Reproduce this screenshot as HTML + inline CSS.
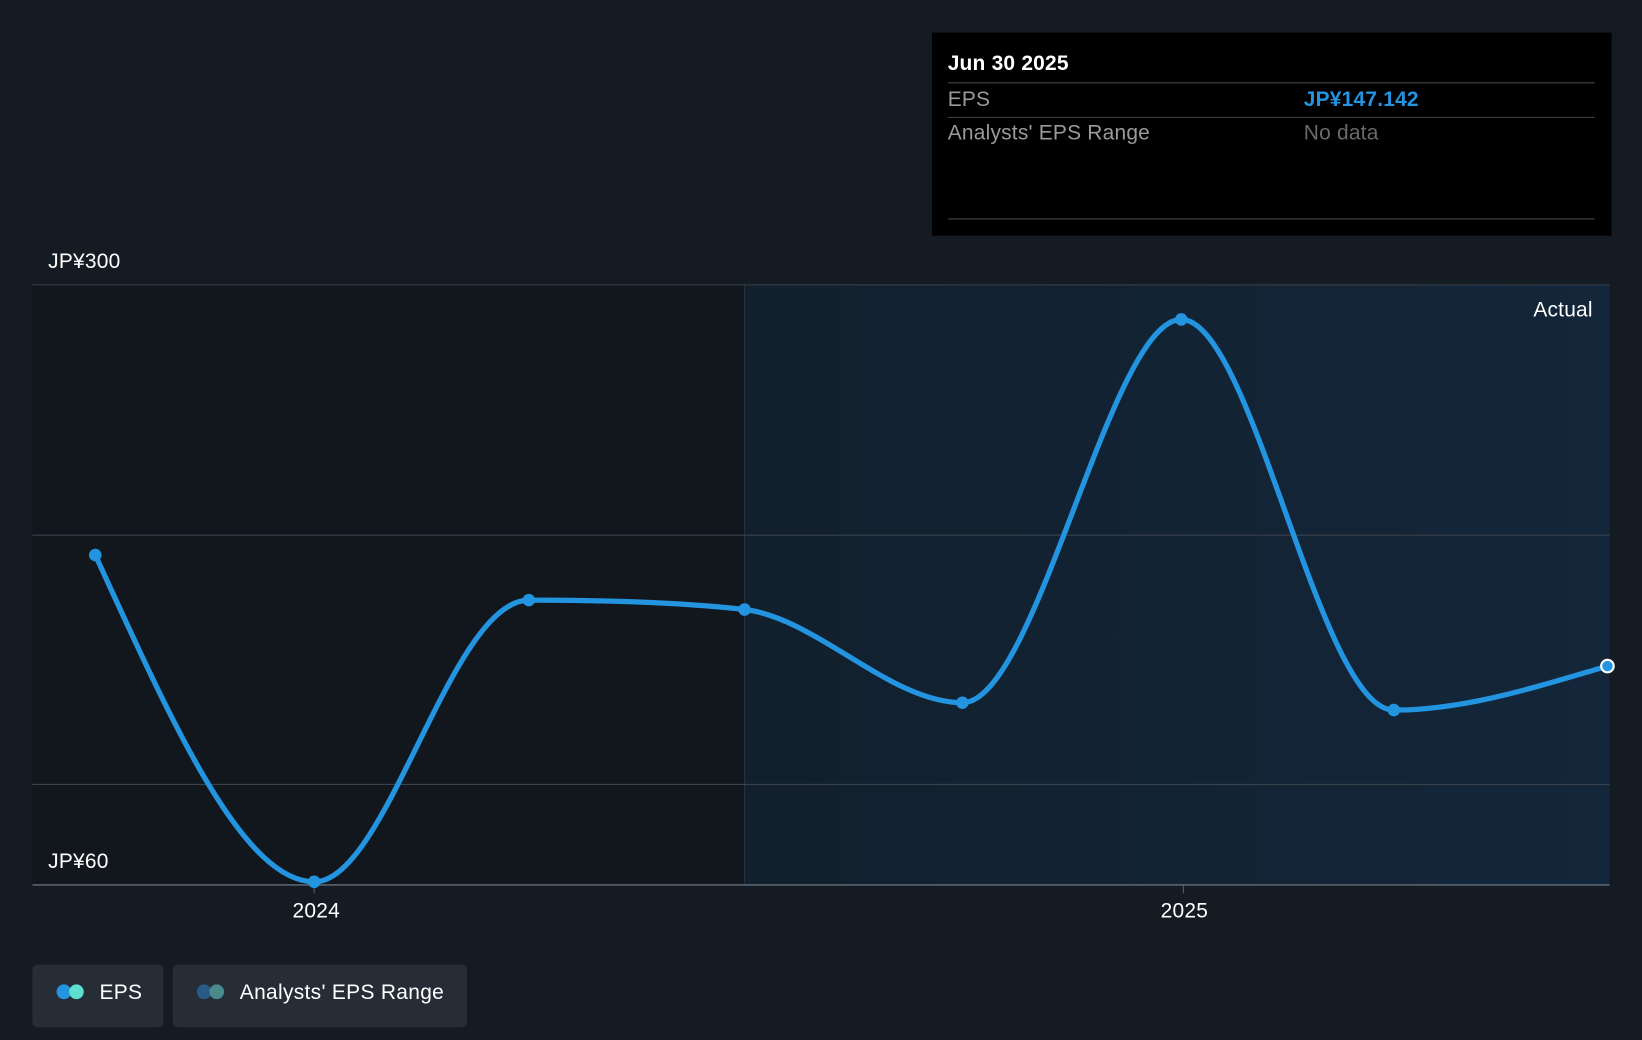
<!DOCTYPE html>
<html><head><meta charset="utf-8"><style>html,body{margin:0;padding:0;background:#151b23;}svg{display:block}</style></head>
<body>
<svg width="1642" height="1040" viewBox="0 0 1568 993" xmlns="http://www.w3.org/2000/svg" font-family="Liberation Sans, sans-serif">
<defs><linearGradient id="g" x1="0" x2="1" y1="0" y2="0"><stop offset="0" stop-color="#12202d"/><stop offset="1" stop-color="#13263a"/></linearGradient></defs>
<rect width="1568" height="993" fill="#151b23"/>
<rect x="31" y="272" width="680" height="573" fill="#12171e"/>
<rect x="711" y="272" width="826" height="573" fill="url(#g)"/>
<line x1="711" y1="272" x2="711" y2="845" stroke="#263240" stroke-width="1"/>
<g stroke="#3a424c" stroke-width="1">
<line x1="31" y1="272" x2="1537" y2="272"/>
<line x1="31" y1="511" x2="1537" y2="511"/>
<line x1="31" y1="749" x2="1537" y2="749"/>
</g>
<line x1="31" y1="845" x2="1537" y2="845" stroke="#5a6270" stroke-width="1.5"/>
<line x1="300" y1="845" x2="300" y2="853" stroke="#5a6270"/>
<line x1="1130" y1="845" x2="1130" y2="853" stroke="#5a6270"/>
<g font-size="20" letter-spacing="0.2">
<text x="46" y="256" fill="#fff">JP¥300</text>
<text x="46" y="829" fill="#fff">JP¥60</text>
<text x="1521" y="302" fill="#fff" text-anchor="end">Actual</text>
<text x="302" y="876" fill="#fff" text-anchor="middle">2024</text>
<text x="1131" y="876" fill="#fff" text-anchor="middle">2025</text>
</g>
<path d="M91,530 C160,680 230,842 300,842 C370,842 430,573 505,573 C580,573 650,575 711,582 C780,590 850,671 919,671 C990,671 1060,305 1128,305 C1196,305 1260,678 1331,678 C1400,678 1470,655 1535,636" fill="none" stroke="#2394df" stroke-width="5"/>
<g fill="#2394df">
<circle cx="91" cy="530" r="6"/><circle cx="300" cy="842" r="6"/><circle cx="505" cy="573" r="6"/><circle cx="711" cy="582" r="6"/><circle cx="919" cy="671" r="6"/><circle cx="1128" cy="305" r="6"/><circle cx="1331" cy="678" r="6"/>
</g>
<circle cx="1535" cy="636" r="6" fill="#2394df" stroke="#fff" stroke-width="2"/>
<rect x="890" y="31" width="649" height="194" fill="#000"/>
<g font-size="20" letter-spacing="0.2">
<text x="905" y="67" fill="#fff" font-weight="bold">Jun 30 2025</text>
<text x="905" y="101" fill="#9a9a9a">EPS</text>
<text x="1245" y="101" fill="#2394df" font-weight="bold">JP¥147.142</text>
<text x="905" y="133" fill="#9a9a9a">Analysts' EPS Range</text>
<text x="1245" y="133" fill="#6a6a6a">No data</text>
</g>
<line x1="905" y1="79" x2="1523" y2="79" stroke="#444"/>
<line x1="905" y1="112" x2="1523" y2="112" stroke="#444"/>
<line x1="905" y1="209" x2="1523" y2="209" stroke="#444"/>
<rect x="31" y="921" width="125" height="60" rx="5" fill="#262d37"/>
<rect x="165" y="921" width="281" height="60" rx="5" fill="#262d37"/>
<circle cx="61" cy="947" r="7" fill="#2394df"/><circle cx="73" cy="947" r="7" fill="#5ce0d0"/>
<circle cx="195" cy="947" r="7" fill="#2a5a86"/><circle cx="207" cy="947" r="7" fill="#4a8a8a"/>
<g font-size="20" letter-spacing="0.3">
<text x="95" y="954" fill="#fff">EPS</text>
<text x="229" y="954" fill="#fff">Analysts' EPS Range</text>
</g>
</svg>
</body></html>
